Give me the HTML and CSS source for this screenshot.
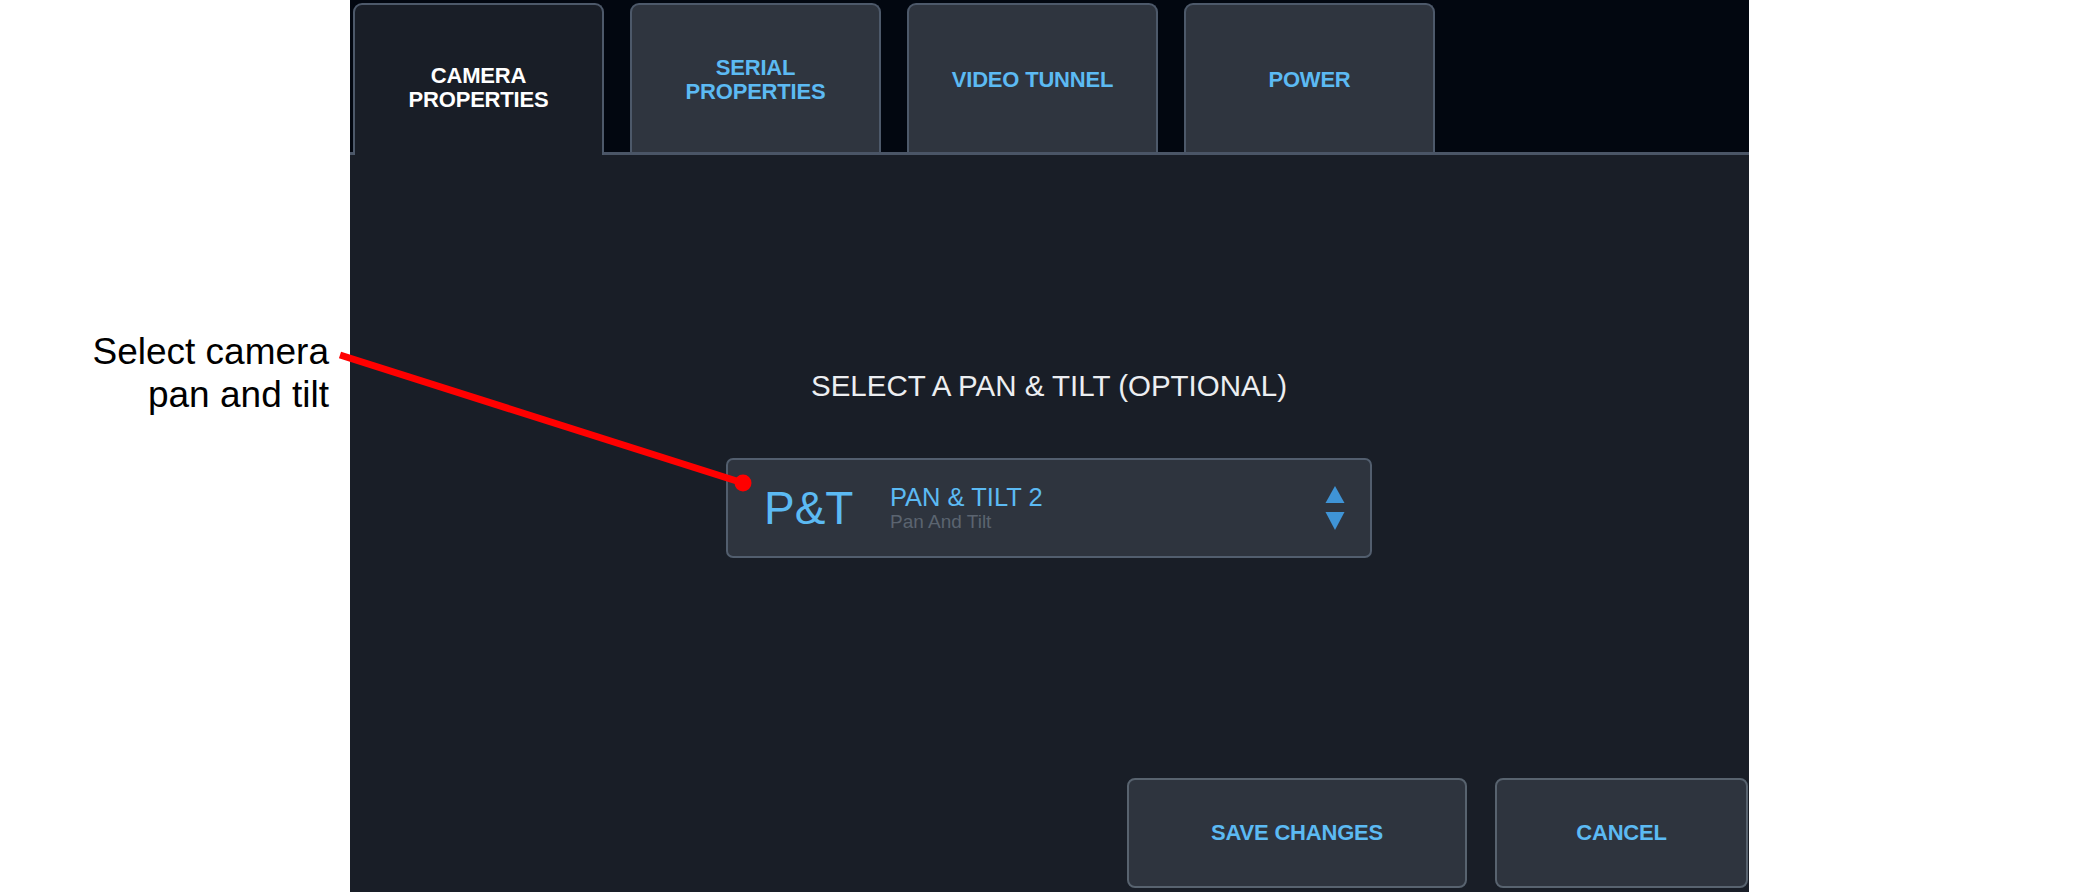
FILE: index.html
```html
<!DOCTYPE html>
<html>
<head>
<meta charset="utf-8">
<link rel="stylesheet" href="styles.css">
</head>
<body>
<div class="page">
  <aside class="callout">
    <p class="callout-text">Select camera<br>pan and tilt</p>
  </aside>
  <main class="panel">
    <nav class="tabs">
      <div class="tab active">CAMERA<br>PROPERTIES</div>
      <div class="tab">SERIAL<br>PROPERTIES</div>
      <div class="tab">VIDEO TUNNEL</div>
      <div class="tab">POWER</div>
    </nav>
    <section class="content">
      <h2 class="prompt">SELECT A PAN &amp; TILT (OPTIONAL)</h2>
      <div class="select">
        <span class="select-code">P&amp;T</span>
        <span class="select-text">
          <span class="select-name">PAN &amp; TILT 2</span>
          <span class="select-type">Pan And Tilt</span>
        </span>
        <svg class="select-arrows" width="20" height="44" viewBox="0 0 20 44">
          <polygon points="10,0 19.5,17 0.5,17" fill="#3f94d6"/>
          <polygon points="0.5,26 19.5,26 10,44" fill="#3f94d6"/>
        </svg>
      </div>
      <div class="actions">
        <button class="btn btn-save">SAVE CHANGES</button>
        <button class="btn btn-cancel">CANCEL</button>
      </div>
    </section>
  </main>
</div>
<svg class="pointer" width="2100" height="892" viewBox="0 0 2100 892">
  <line x1="340" y1="355" x2="743" y2="483" stroke="#ff0000" stroke-width="7"/>
  <circle cx="743" cy="483" r="8.5" fill="#ff0000"/>
</svg>
</body>
</html>
```

FILE: styles.css
```css
html, body {
  margin: 0;
  padding: 0;
  background: #ffffff;
}

body {
  width: 2100px;
  height: 892px;
  overflow: hidden;
  font-family: "Liberation Sans", Arial, sans-serif;
}

.page {
  display: flex;
  height: 892px;
}

.callout {
  width: 350px;
  flex: none;
  box-sizing: border-box;
  padding: 330px 21px 0 0;
}

.callout-text {
  margin: 0;
  text-align: right;
  font-size: 37px;
  line-height: 43px;
  color: #000000;
}

.panel {
  width: 1399px;
  flex: none;
  display: flex;
  flex-direction: column;
  background: #191e27;
}

.tabs {
  height: 155px;
  box-sizing: border-box;
  display: flex;
  align-items: flex-start;
  gap: 26px;
  padding: 3px 0 0 3px;
  background: #020710;
  border-bottom: 3px solid #4a5566;
}

.tab {
  width: 251px;
  height: 149px;
  box-sizing: border-box;
  display: flex;
  align-items: center;
  justify-content: center;
  text-align: center;
  background: #2f353f;
  border: 2px solid #4d596a;
  border-bottom: none;
  border-radius: 9px 9px 0 0;
  font-weight: bold;
  font-size: 22px;
  line-height: 24px;
  letter-spacing: -0.2px;
  color: #5cbaf3;
  padding-top: 3px;
}

.tab.active {
  height: 152px;
  margin-bottom: -3px;
  background: #191e27;
  color: #ffffff;
  padding-top: 16px;
}

.content {
  flex: 1;
  display: flex;
  flex-direction: column;
  align-items: center;
  padding: 214px 1px 4px 0;
}

.prompt {
  margin: 0;
  font-weight: normal;
  font-size: 29.5px;
  line-height: 34px;
  color: #eceef1;
}

.select {
  margin-top: 55px;
  width: 646px;
  height: 100px;
  box-sizing: border-box;
  display: flex;
  align-items: center;
  padding: 0 25px 0 36px;
  background: #2e343e;
  border: 2px solid #525e6e;
  border-radius: 7px;
}

.select-code {
  font-size: 46px;
  line-height: 46px;
  color: #5cbaf3;
  width: 126px;
  flex: none;
}

.select-text {
  display: flex;
  flex-direction: column;
  flex: 1;
  padding-top: 1px;
}

.select-name {
  font-size: 25.5px;
  line-height: 25px;
  color: #5cbaf3;
}

.select-type {
  margin-top: 2px;
  font-size: 19px;
  line-height: 20px;
  color: #5b6470;
}

.select-arrows {
  flex: none;
  display: block;
}

.actions {
  margin-top: auto;
  align-self: flex-end;
  display: flex;
  gap: 28px;
}

.btn {
  height: 110px;
  box-sizing: border-box;
  background: #2e343e;
  border: 2px solid #58636f;
  border-radius: 8px;
  font-family: "Liberation Sans", Arial, sans-serif;
  font-weight: bold;
  font-size: 22px;
  letter-spacing: -0.2px;
  color: #5cbaf3;
  padding: 0;
}

.btn-save {
  width: 340px;
}

.btn-cancel {
  width: 253px;
}

.pointer {
  position: absolute;
  left: 0;
  top: 0;
  pointer-events: none;
}
```
